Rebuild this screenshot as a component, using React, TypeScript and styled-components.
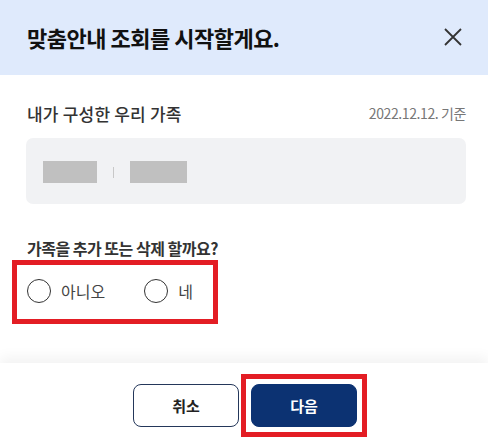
import React, { useState } from 'react';
import styled, { createGlobalStyle } from 'styled-components';

const GlobalStyle = createGlobalStyle`
  html, body {
    margin: 0;
    padding: 0;
    background: #fff;
  }
  body {
    font-family: 'Noto Sans CJK KR', 'Noto Sans', sans-serif;
    color: #222;
  }
  * {
    box-sizing: border-box;
  }
`;

type Choice = 'no' | 'yes' | null;

function App() {
  const [choice, setChoice] = useState<Choice>(null);

  return (
    <>
      <GlobalStyle />
      <Modal>
        <Header>
          <Title>맞춤안내 조회를 시작할게요.</Title>
          <CloseButton aria-label="닫기">
            <svg width="18" height="18" viewBox="0 0 18 18">
              <path d="M1 1L17 17M17 1L1 17" stroke="#333" strokeWidth="1.8" fill="none" />
            </svg>
          </CloseButton>
        </Header>

        <Body>
          <SectionHead>
            <SectionTitle>내가 구성한 우리 가족</SectionTitle>
            <DateLabel>2022.12.12. 기준</DateLabel>
          </SectionHead>

          <FamilyBox>
            <Masked $width={54} />
            <Divider />
            <Masked $width={57} />
          </FamilyBox>

          <Question>가족을 추가 또는 삭제 할까요?</Question>

          <RadioArea>
            <RadioGroup>
              <RadioLabel onClick={() => setChoice('no')}>
                <RadioCircle $checked={choice === 'no'} />
                아니오
              </RadioLabel>
              <RadioLabel onClick={() => setChoice('yes')}>
                <RadioCircle $checked={choice === 'yes'} />
                네
              </RadioLabel>
            </RadioGroup>
            <Mark $inset="-19px -25px -21px -15px" />
          </RadioArea>
        </Body>

        <Footer>
          <Button>취소</Button>
          <Highlighted>
            <Button $primary>다음</Button>
            <Mark $inset="-10px -10px -10px -10px" />
          </Highlighted>
        </Footer>
      </Modal>
    </>
  );
}

const Modal = styled.div`
  width: 488px;
  height: 441px;
  display: flex;
  flex-direction: column;
  background: #fff;
  overflow: hidden;
`;

const Header = styled.header`
  height: 75px;
  flex-shrink: 0;
  display: flex;
  align-items: center;
  justify-content: space-between;
  padding: 0 26px 2px 27px;
  background: #dfeafc;
`;

const Title = styled.h2`
  margin: 0;
  font-size: 22px;
  font-weight: 700;
  letter-spacing: -0.5px;
  color: #111;
`;

const CloseButton = styled.button`
  display: flex;
  padding: 0;
  border: none;
  background: none;
  cursor: pointer;
`;

const Body = styled.div`
  flex: 1;
  padding: 25px 22px 0 27px;
`;

const SectionHead = styled.div`
  display: flex;
  align-items: center;
  justify-content: space-between;
  height: 26px;
`;

const SectionTitle = styled.h3`
  margin: 0;
  font-size: 17px;
  font-weight: 500;
  letter-spacing: 0.2px;
  color: #333;
`;

const DateLabel = styled.span`
  font-size: 14px;
  color: #777;
  letter-spacing: -0.4px;
`;

const FamilyBox = styled.div`
  display: flex;
  align-items: center;
  gap: 16px;
  height: 66px;
  margin: 12px 0 0 -1px;
  padding: 2px 17px 0;
  background: #f1f2f4;
  border-radius: 7px;
`;

const Masked = styled.span<{ $width: number }>`
  width: ${(p) => p.$width}px;
  height: 22px;
  background: #c0c0c0;
`;

const Divider = styled.span`
  width: 1px;
  height: 11px;
  background: #c8c8c8;
`;

const Question = styled.p`
  margin: 32px 0 0;
  font-size: 16px;
  line-height: 24px;
  font-weight: 700;
  letter-spacing: -0.5px;
  color: #333;
`;

const Highlighted = styled.div`
  position: relative;
  display: inline-flex;
`;

const RadioArea = styled(Highlighted)`
  margin-top: 19px;
`;

const Mark = styled.span<{ $inset: string }>`
  position: absolute;
  inset: ${(p) => p.$inset};
  border: 5px solid #e31d24;
  pointer-events: none;
`;

const RadioGroup = styled.div`
  display: flex;
  align-items: center;
  gap: 39px;
`;

const RadioLabel = styled.label`
  display: flex;
  align-items: center;
  gap: 10px;
  font-size: 16px;
  color: #444;
  cursor: pointer;
`;

const RadioCircle = styled.span<{ $checked: boolean }>`
  width: 24px;
  height: 24px;
  border-radius: 50%;
  border: 1.5px solid #333;
  box-shadow: ${(p) => (p.$checked ? 'inset 0 0 0 5px #fff, inset 0 0 0 12px #0c3272' : 'none')};
`;

const Footer = styled.footer`
  height: 78px;
  flex-shrink: 0;
  display: flex;
  justify-content: center;
  align-items: flex-start;
  gap: 12px;
  padding: 21px 0 0 2px;
  background: #fff;
  box-shadow: 0 -6px 12px rgba(0, 0, 0, 0.05);
`;

const Button = styled.button<{ $primary?: boolean }>`
  width: 106px;
  height: 43px;
  border-radius: 8px;
  border: 1px solid ${(p) => (p.$primary ? '#0c3272' : '#24375a')};
  background: ${(p) => (p.$primary ? '#0c3272' : '#fff')};
  color: ${(p) => (p.$primary ? '#fff' : '#222')};
  font-family: inherit;
  font-size: 15px;
  font-weight: 700;
  cursor: pointer;
`;

export default App;
